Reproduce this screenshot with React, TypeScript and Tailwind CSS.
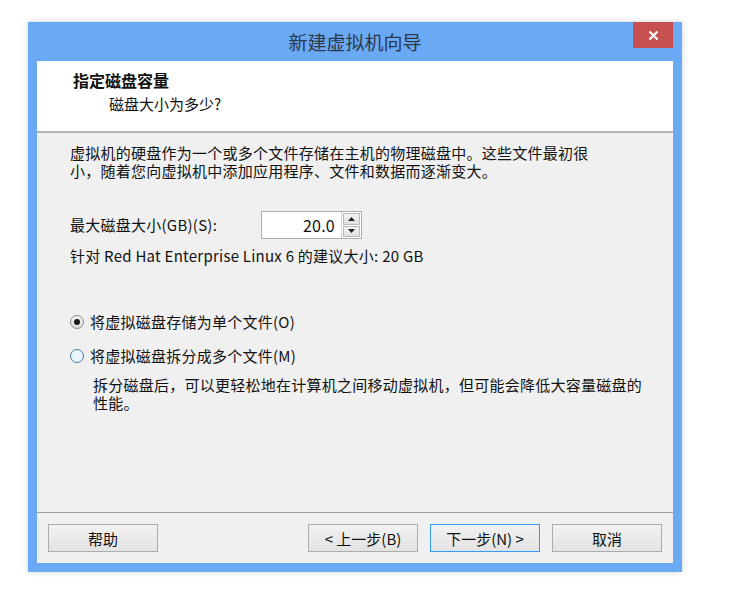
import React from 'react';

const Radio: React.FC<{ checked?: boolean }> = ({ checked }) =>
  checked ? (
    <span className="grid h-[14px] w-[14px] place-items-center rounded-full border border-[#8a8a8a] bg-gradient-to-b from-[#f4f4f4] to-[#dcdcdc]">
      <span className="h-[6px] w-[6px] rounded-full bg-[#1a1a1a]" />
    </span>
  ) : (
    <span className="h-[14px] w-[14px] rounded-full border border-[#3c7fb1] bg-[#eaf6fd]" />
  );

const Btn: React.FC<{ children: React.ReactNode; primary?: boolean }> = ({ children, primary }) => (
  <button
    className={
      primary
        ? 'h-[28px] w-[110px] border border-[#3399ff] bg-gradient-to-b from-[#f2f2f2] to-[#e3e3e3] text-[15px] leading-none text-[#111]'
        : 'h-[28px] w-[110px] border border-[#acacac] bg-gradient-to-b from-[#f2f2f2] to-[#e3e3e3] text-[15px] leading-none text-[#111]'
    }
  >
    {children}
  </button>
);

export default function App() {
  return (
    <div className="min-h-[597px] bg-white pl-[28px] pt-[22px] font-['Noto_Sans_CJK_SC',sans-serif] text-[#111]">
      <div className="flex h-[550px] w-[654px] flex-col bg-[#6aa9f3] px-[9px] pb-[9px] shadow-[0_0_6px_rgba(0,0,0,0.18)]">
        {/* title bar */}
        <div className="relative flex h-[39px] items-center justify-center">
          <span className="text-[19px] leading-none text-[#2e3748]">新建虚拟机向导</span>
          <button className="absolute right-0 top-0 grid h-[26px] w-[40px] place-items-center bg-[#c75050]">
            <svg width="11" height="11" viewBox="0 0 11 11">
              <path d="M1.5 1.5 L9.5 9.5 M9.5 1.5 L1.5 9.5" stroke="#fff" strokeWidth="2.2" />
            </svg>
          </button>
        </div>

        {/* client */}
        <div className="flex flex-1 flex-col bg-[#f0f0f0]">
          <div className="h-[72px] border-b-2 border-[#b4b4b4] bg-white pl-[36px] pt-[10px]">
            <div className="text-[16px] font-bold leading-[18px]">指定磁盘容量</div>
            <div className="mt-[6px] pl-[36px] text-[15px] leading-[18px]">磁盘大小为多少?</div>
          </div>

          <div className="flex-1 pl-[33px] pt-[11px] text-[15px] leading-[18px] tracking-[0.25px]">
            <p>
              虚拟机的硬盘作为一个或多个文件存储在主机的物理磁盘中。这些文件最初很
              <br />
              小，随着您向虚拟机中添加应用程序、文件和数据而逐渐变大。
            </p>

            <div className="mt-[31px] flex items-center">
              <span className="w-[191px]">最大磁盘大小(GB)(S):</span>
              <div className="flex h-[28px] border border-[#abadb3] bg-white">
                <div className="w-[79px] pr-[6px] text-right text-[16px] leading-[26px]">20.0</div>
                <div className="flex w-[20px] flex-col gap-px border-l border-[#d5d5d5] p-px">
                  <div className="grid flex-1 place-items-center border border-[#b9b9b9] bg-gradient-to-b from-[#f4f4f4] to-[#e1e1e1]">
                    <svg width="7" height="4" viewBox="0 0 7 4"><path d="M0 4 L3.5 0 L7 4 Z" fill="#222" /></svg>
                  </div>
                  <div className="grid flex-1 place-items-center border border-[#b9b9b9] bg-gradient-to-b from-[#f4f4f4] to-[#e1e1e1]">
                    <svg width="7" height="4" viewBox="0 0 7 4"><path d="M0 0 L7 0 L3.5 4 Z" fill="#222" /></svg>
                  </div>
                </div>
              </div>
            </div>

            <p className="mt-[8px]">针对 Red Hat Enterprise Linux 6 的建议大小: 20 GB</p>

            <label className="mt-[48px] flex items-center gap-[6px]">
              <Radio checked />
              <span>将虚拟磁盘存储为单个文件(O)</span>
            </label>
            <label className="mt-[16px] flex items-center gap-[6px]">
              <Radio />
              <span>将虚拟磁盘拆分成多个文件(M)</span>
            </label>
            <p className="mt-[11px] pl-[23px]">
              拆分磁盘后，可以更轻松地在计算机之间移动虚拟机，但可能会降低大容量磁盘的
              <br />
              性能。
            </p>
          </div>

          <div className="flex h-[51px] items-start border-t border-[#a0a0a0] px-[11px] pt-[11px]">
            <Btn>帮助</Btn>
            <div className="ml-auto flex gap-[12px]">
              <Btn>&lt; 上一步(B)</Btn>
              <Btn primary>下一步(N) &gt;</Btn>
              <Btn>取消</Btn>
            </div>
          </div>
        </div>
      </div>
    </div>
  );
}
